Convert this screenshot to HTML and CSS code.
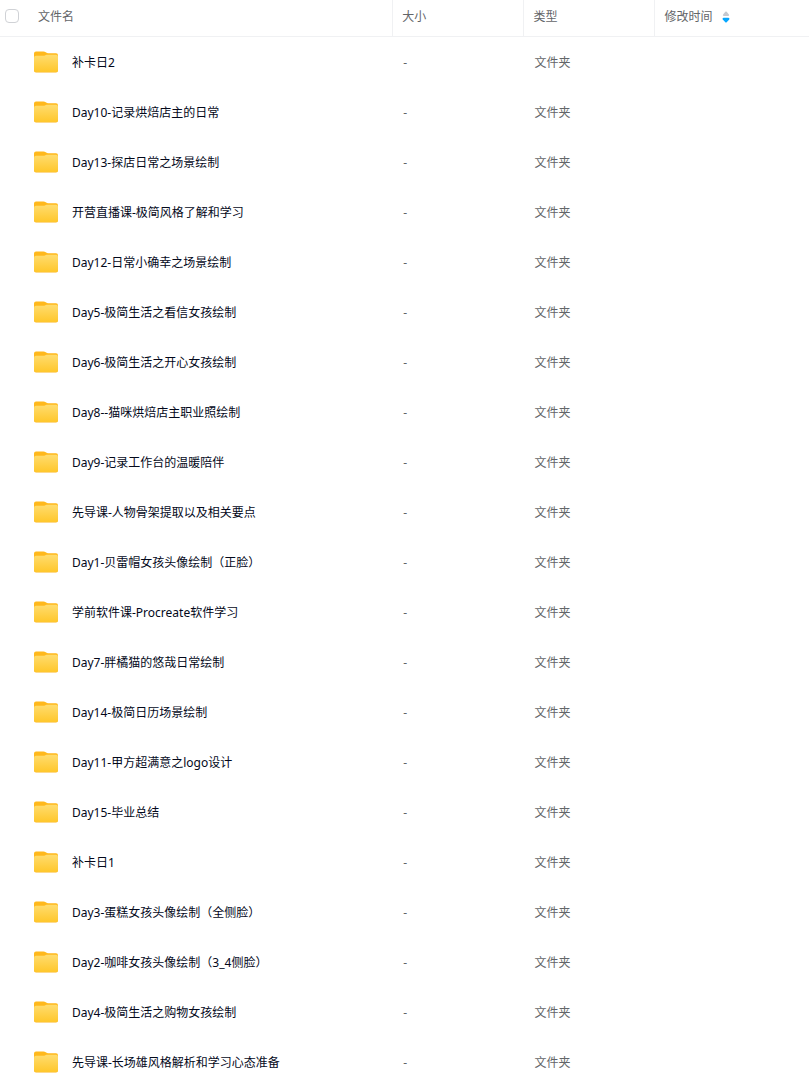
FILE: index.html
```html
<!DOCTYPE html>
<html lang="zh-CN">
<head>
<meta charset="UTF-8">
<meta name="viewport" content="width=device-width, initial-scale=1.0">
<title>文件列表</title>
<link rel="stylesheet" href="styles.css">
</head>
<body>
<!-- folder icon, used by every row -->
<svg class="defs" width="0" height="0" aria-hidden="true">
    <defs>
        <linearGradient id="folder-front" x1="0" y1="0" x2="0" y2="1">
            <stop offset="0" stop-color="#ffdc6e"/>
            <stop offset="1" stop-color="#ffc72b"/>
        </linearGradient>
        <symbol id="folder" viewBox="0 0 24 22">
            <path fill="#ffb81c" d="M2 .5h7.500c.9 0 1.600.2 2.200.7l.9.600c.4.300.8.400 1.300.4H22a2 2 0 0 1 2 2V12H0V2.500a2 2 0 0 1 2-2z"/>
            <path fill="#fbb41c" d="M0 17h24v2.500a2 2 0 0 1-2 2H2a2 2 0 0 1-2-2z"/>
            <path fill="url(#folder-front)" d="M2 4.800h7c.8 0 1.400-.1 2-.4l.7-.3c.5-.2 1-.3 1.500-.3H22a2 2 0 0 1 2 2V19a2 2 0 0 1-2 2H2a2 2 0 0 1-2-2V6.800a2 2 0 0 1 2-2z"/>
        </symbol>
    </defs>
</svg>

<main class="list">
<table class="files">
    <colgroup>
        <col class="col-name">
        <col class="col-size">
        <col class="col-type">
        <col class="col-time">
    </colgroup>
    <thead>
        <tr>
            <th scope="col">
                <div class="head-name">
                    <input class="check" type="checkbox" id="all">
                    <label for="all">文件名</label>
                </div>
            </th>
            <th scope="col">大小</th>
            <th scope="col">类型</th>
            <th scope="col">
                <button class="sort" type="button">
                    修改时间
                    <svg class="arrows" viewBox="0 0 8 12" aria-hidden="true">
                        <path fill="#c4c8cf" d="M3.300.8a1 1 0 0 1 1.400 0L6.900 3.600c.5.600.1 1.400-.7 1.400H1.800c-.8 0-1.200-.8-.7-1.400z"/>
                        <path fill="#06a7ff" d="M3.300 11.200a1 1 0 0 0 1.400 0l2.500-2.800c.5-.7.1-1.600-.8-1.600H1.600c-.9 0-1.300.9-.8 1.600z"/>
                    </svg>
                </button>
            </th>
        </tr>
    </thead>
    <tbody>
        <tr>
            <td><a class="name" href="#"><svg class="icon"><use href="#folder"/></svg>补卡日2</a></td>
            <td>-</td><td>文件夹</td><td></td>
        </tr>
        <tr>
            <td><a class="name" href="#"><svg class="icon"><use href="#folder"/></svg>Day10-记录烘焙店主的日常</a></td>
            <td>-</td><td>文件夹</td><td></td>
        </tr>
        <tr>
            <td><a class="name" href="#"><svg class="icon"><use href="#folder"/></svg>Day13-探店日常之场景绘制</a></td>
            <td>-</td><td>文件夹</td><td></td>
        </tr>
        <tr>
            <td><a class="name" href="#"><svg class="icon"><use href="#folder"/></svg>开营直播课-极简风格了解和学习</a></td>
            <td>-</td><td>文件夹</td><td></td>
        </tr>
        <tr>
            <td><a class="name" href="#"><svg class="icon"><use href="#folder"/></svg>Day12-日常小确幸之场景绘制</a></td>
            <td>-</td><td>文件夹</td><td></td>
        </tr>
        <tr>
            <td><a class="name" href="#"><svg class="icon"><use href="#folder"/></svg>Day5-极简生活之看信女孩绘制</a></td>
            <td>-</td><td>文件夹</td><td></td>
        </tr>
        <tr>
            <td><a class="name" href="#"><svg class="icon"><use href="#folder"/></svg>Day6-极简生活之开心女孩绘制</a></td>
            <td>-</td><td>文件夹</td><td></td>
        </tr>
        <tr>
            <td><a class="name" href="#"><svg class="icon"><use href="#folder"/></svg>Day8--猫咪烘焙店主职业照绘制</a></td>
            <td>-</td><td>文件夹</td><td></td>
        </tr>
        <tr>
            <td><a class="name" href="#"><svg class="icon"><use href="#folder"/></svg>Day9-记录工作台的温暖陪伴</a></td>
            <td>-</td><td>文件夹</td><td></td>
        </tr>
        <tr>
            <td><a class="name" href="#"><svg class="icon"><use href="#folder"/></svg>先导课-人物骨架提取以及相关要点</a></td>
            <td>-</td><td>文件夹</td><td></td>
        </tr>
        <tr>
            <td><a class="name" href="#"><svg class="icon"><use href="#folder"/></svg>Day1-贝雷帽女孩头像绘制（正脸）</a></td>
            <td>-</td><td>文件夹</td><td></td>
        </tr>
        <tr>
            <td><a class="name" href="#"><svg class="icon"><use href="#folder"/></svg>学前软件课-Procreate软件学习</a></td>
            <td>-</td><td>文件夹</td><td></td>
        </tr>
        <tr>
            <td><a class="name" href="#"><svg class="icon"><use href="#folder"/></svg>Day7-胖橘猫的悠哉日常绘制</a></td>
            <td>-</td><td>文件夹</td><td></td>
        </tr>
        <tr>
            <td><a class="name" href="#"><svg class="icon"><use href="#folder"/></svg>Day14-极简日历场景绘制</a></td>
            <td>-</td><td>文件夹</td><td></td>
        </tr>
        <tr>
            <td><a class="name" href="#"><svg class="icon"><use href="#folder"/></svg>Day11-甲方超满意之logo设计</a></td>
            <td>-</td><td>文件夹</td><td></td>
        </tr>
        <tr>
            <td><a class="name" href="#"><svg class="icon"><use href="#folder"/></svg>Day15-毕业总结</a></td>
            <td>-</td><td>文件夹</td><td></td>
        </tr>
        <tr>
            <td><a class="name" href="#"><svg class="icon"><use href="#folder"/></svg>补卡日1</a></td>
            <td>-</td><td>文件夹</td><td></td>
        </tr>
        <tr>
            <td><a class="name" href="#"><svg class="icon"><use href="#folder"/></svg>Day3-蛋糕女孩头像绘制（全侧脸）</a></td>
            <td>-</td><td>文件夹</td><td></td>
        </tr>
        <tr>
            <td><a class="name" href="#"><svg class="icon"><use href="#folder"/></svg>Day2-咖啡女孩头像绘制（3_4侧脸）</a></td>
            <td>-</td><td>文件夹</td><td></td>
        </tr>
        <tr>
            <td><a class="name" href="#"><svg class="icon"><use href="#folder"/></svg>Day4-极简生活之购物女孩绘制</a></td>
            <td>-</td><td>文件夹</td><td></td>
        </tr>
        <tr>
            <td><a class="name" href="#"><svg class="icon"><use href="#folder"/></svg>先导课-长场雄风格解析和学习心态准备</a></td>
            <td>-</td><td>文件夹</td><td></td>
        </tr>
    </tbody>
</table>
</main>
</body>
</html>
```
FILE: styles.css
```css
*{box-sizing:border-box;}
body{
    margin:0;
    background:#fff;
    color:#636568;
    font-family:"Noto Sans","Noto Sans CJK SC",sans-serif;
    font-size:12px;
    line-height:18px;
}
.defs{position:absolute;}

/* the list scrolls inside the window */
.list{
    height:100vh;
    overflow-y:auto;
    scrollbar-width:none;
}
.files{
    width:100%;
    table-layout:fixed;
    border-collapse:separate;
    border-spacing:0;
}
.col-name{width:48.5%;}
.col-size,.col-type{width:16.2%;}

th{
    height:37px;
    padding:0 9px 2px;
    border-bottom:1px solid #f0f1f3;
    border-left:1px solid #f0f1f3;
    font-weight:400;
    text-align:left;
}
th:first-child{
    padding-left:5px;
    border-left:none;
}
.head-name{
    display:flex;
    align-items:center;
    gap:19px;
}
.check{
    appearance:none;
    width:14px;
    height:14px;
    margin:0 0 2px;
    border:1px solid #d0d2d6;
    border-radius:4px;
    background:#fff;
}
.check:checked{
    border-color:#06a7ff;
    background:#06a7ff;
}
.sort{
    display:flex;
    align-items:center;
    gap:10px;
    padding:0;
    border:none;
    background:none;
    color:inherit;
    font:inherit;
    cursor:pointer;
}
.arrows{
    width:8px;
    height:12px;
}

td{
    height:50px;
    padding:2px 11px 0;
    white-space:nowrap;
}
td:first-child{padding-left:34px;}
.name{
    display:flex;
    align-items:center;
    gap:14px;
    color:#03081a;
    text-decoration:none;
}
.name:hover{color:#06a7ff;}
.icon{
    flex:none;
    width:24px;
    height:22px;
    margin-bottom:2px;
}
```
